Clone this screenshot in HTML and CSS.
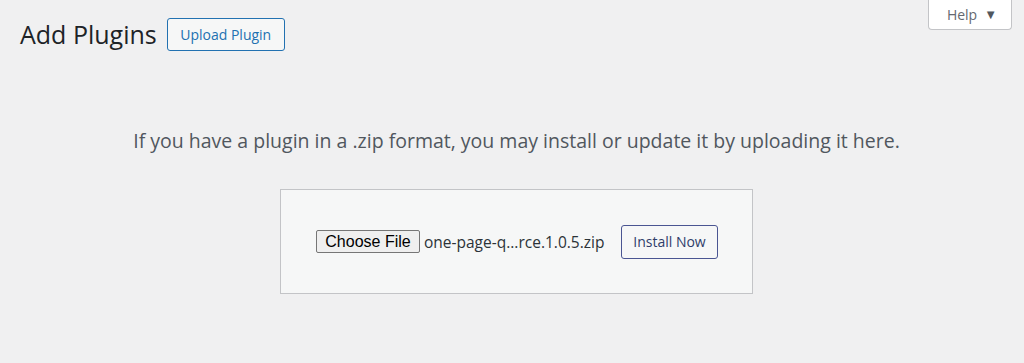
FILE: index.html
```html
<!DOCTYPE html>
<html lang="en">
<head>
<meta charset="utf-8">
<title>Add Plugins</title>
<link rel="stylesheet" href="styles.css">
</head>
<body>
<div class="screen-meta">
  <button class="help-tab" type="button">Help <span class="caret">▼</span></button>
</div>
<div class="wrap">
  <div class="title-row">
    <h1 class="page-title">Add Plugins</h1>
    <a class="title-action" href="#">Upload Plugin</a>
  </div>
  <p class="install-help">If you have a plugin in a .zip format, you may install or update it by uploading it here.</p>
  <div class="form-holder">
    <form class="upload-form">
      <div class="file-field">
        <span class="file-btn">Choose File</span>
        <span class="file-name">one-page-q...rce.1.0.5.zip</span>
      </div>
      <button class="install-btn" type="button">Install Now</button>
    </form>
  </div>
</div>
</body>
</html>
```

FILE: styles.css
```css
html, body {
  margin: 0;
  padding: 0;
}
body {
  background: #f0f0f1;
  font-family: "Open Sans", "Noto Sans", sans-serif;
  color: #3c434a;
  height: 363px;
  overflow: hidden;
}
.screen-meta {
  float: right;
  margin-right: 12px;
}
.help-tab {
  width: 84px;
  height: 30px;
  background: #fff;
  border: 1px solid #c3c4c7;
  border-top: none;
  border-radius: 0 0 4px 4px;
  color: #646970;
  font-family: inherit;
  font-size: 14px;
  padding: 0 0 1px 4px;
  display: flex;
  align-items: center;
  justify-content: center;
  gap: 7px;
}
.caret {
  font-size: 13px;
  color: #50575e;
}
.wrap {
  padding: 18px 11px 0 20px;
}
.title-row {
  display: flex;
  align-items: center;
  gap: 10px;
}
.page-title {
  margin: 0;
  font-size: 25px;
  font-weight: 400;
  color: #1d2327;
  line-height: 33px;
}
.title-action {
  display: inline-flex;
  align-items: center;
  justify-content: center;
  box-sizing: border-box;
  width: 118px;
  height: 33px;
  border: 1px solid #2271b1;
  border-radius: 3px;
  background: #f6f7f7;
  color: #2271b1;
  font-size: 14px;
  text-decoration: none;
}
.install-help {
  margin: 0;
  padding: 78px 0 0;
  text-align: center;
  font-size: 19.5px;
  line-height: 24px;
  color: #50575e;
}
.form-holder {
  display: flex;
  justify-content: center;
  padding-top: 36px;
}
.upload-form {
  display: flex;
  align-items: center;
  box-sizing: border-box;
  width: 473px;
  height: 105px;
  padding: 0 34px 0 35px;
  background: #f6f7f7;
  border: 1px solid #c3c4c7;
  justify-content: space-between;
}
.file-field {
  display: flex;
  align-items: center;
  gap: 4px;
}
.file-btn {
  box-sizing: border-box;
  width: 104px;
  height: 23px;
  display: inline-flex;
  align-items: center;
  justify-content: center;
  background: #efefef;
  border: 1px solid #767676;
  border-radius: 2px;
  font-family: "Liberation Sans", Arial, sans-serif;
  font-size: 16px;
  color: #000;
}
.file-name {
  font-size: 15.5px;
  color: #2c3338;
}
.install-btn {
  box-sizing: border-box;
  width: 97px;
  height: 34px;
  border: 1px solid #4a5592;
  border-radius: 3px;
  background: #f6f7f7;
  color: #2f3d6a;
  font-family: inherit;
  font-size: 14px;
  padding: 0;
}
```
